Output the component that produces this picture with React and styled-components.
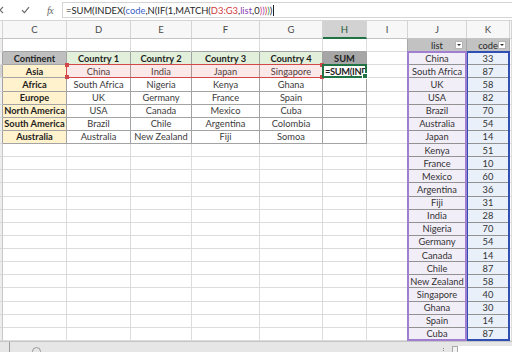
import React from 'react';
import styled, { createGlobalStyle } from 'styled-components';

const GlobalStyle = createGlobalStyle`
  html, body { margin: 0; padding: 0; background: #fff; }
  body { font-family: Lato, "Open Sans", sans-serif; overflow: hidden; }
`;

const Window = styled.div`
  width: 512px;
  height: 352px;
  display: flex;
  flex-direction: column;
  overflow: hidden;
  background: #fff;
`;

const FormulaBar = styled.div`
  flex: none;
  height: 20px;
  display: flex;
  align-items: center;
  border-bottom: 1px solid #d6d6d6;
`;

const BarButtons = styled.div`
  width: 62px;
  height: 100%;
  display: flex;
  align-items: center;
  color: #6b6b6b;
`;

const BarIcon = styled.span`
  display: flex;
  align-items: center;
  margin-left: ${p => p.$ml}px;
`;

const Fx = styled.span`
  font-family: "Liberation Serif", serif;
  font-style: italic;
  font-size: 10px;
  color: #666;
  margin-left: 17px;
  letter-spacing: -0.5px;
`;

const FormulaInput = styled.div`
  flex: 1;
  height: 16px;
  box-sizing: border-box;
  border: 1px solid #d4d4d4;
  border-right: none;
  display: flex;
  align-items: center;
  padding-left: 3px;
  font-size: 9.4px;
  color: #262626;
  white-space: nowrap;
`;

const Tok = styled.span`
  color: ${p => p.$c || '#262626'};
`;

const Caret = styled.span`
  width: 1px;
  height: 11px;
  background: #222;
  margin-left: 1px;
`;

const Sheet = styled.div`
  flex: none;
  display: grid;
  grid-template-columns: 3px 64px 64px 61px 68px 63px 44px 41px 59px 43px 1fr;
  grid-template-rows: 18px repeat(23, 13.14px);
`;

const ColHead = styled.div`
  grid-row: 1;
  grid-column: ${p => p.$c};
  box-sizing: border-box;
  display: flex;
  align-items: center;
  justify-content: center;
  font-size: 9.5px;
  color: ${p => (p.$active ? '#1e5b38' : '#4a4a4a')};
  background: ${p => (p.$active ? '#d2d2d2' : '#f7f7f7')};
  border-right: 1px solid #d4d4d4;
  border-bottom: ${p => (p.$active ? '2px solid #217346' : '1px solid #c4c4c4')};
`;

const RowStub = styled.div`
  grid-row: ${p => p.$r};
  grid-column: 1;
  box-sizing: border-box;
  background: ${p => (p.$active ? '#d2d2d2' : '#eeeeee')};
  border-right: 1px solid ${p => p.$edge || '#c8c8c8'};
  border-bottom: 1px solid #d8d8d8;
`;

const Cell = styled.div`
  grid-row: ${p => p.$r};
  grid-column: ${p => p.$c};
  box-sizing: border-box;
  display: flex;
  align-items: center;
  justify-content: ${p => (p.$left ? 'flex-start' : 'center')};
  padding-left: ${p => (p.$left ? 2 : 0)}px;
  overflow: hidden;
  white-space: nowrap;
  font-size: 9.3px;
  font-weight: ${p => (p.$bold ? 700 : 400)};
  color: ${p => p.$color || '#3b3b3b'};
  background: ${p => p.$bg || '#fff'};
  border-right: 1px solid ${p => p.$right || '#dcdcdc'};
  border-bottom: 1px solid ${p => p.$bottom || '#dcdcdc'};
`;

const EditText = styled.span`
  letter-spacing: -0.35px;
`;

const FilterHead = styled(Cell)`
  position: relative;
  background: #c2c2c2;
  color: #262626;
  border-bottom-color: #8c8c8c;
  border-right-color: #a8a8a8;
`;

const DropButton = styled.span`
  position: absolute;
  right: 3px;
  top: 2px;
  width: 8px;
  height: 8px;
  box-sizing: border-box;
  background: #fff;
  border: 1px solid #b5b5b5;
  display: flex;
  align-items: center;
  justify-content: center;

  &::after {
    content: '';
    border-left: 2px solid transparent;
    border-right: 2px solid transparent;
    border-top: 2px solid #333;
  }
`;

const RefBox = styled.div`
  grid-row: ${p => p.$r};
  grid-column: ${p => p.$c};
  position: relative;
  pointer-events: none;
  margin: -1px 0 0 -1px;
  border: ${p => p.$w || 1}px solid ${p => p.$color};
  background: ${p => p.$fill || 'transparent'};
`;

const Handle = styled.span`
  position: absolute;
  width: 4px;
  height: 4px;
  background: ${p => p.$color};
  ${p => (p.$top ? 'top: -2px;' : 'bottom: -2px;')}
  ${p => (p.$leftSide ? 'left: -2px;' : 'right: -2px;')}
`;

const ActiveHandle = styled.span`
  position: absolute;
  right: -3px;
  bottom: -3px;
  width: 4px;
  height: 4px;
  background: #217346;
  border: 1px solid #fff;
`;

const Footer = styled.div`
  flex: 1;
  display: flex;
  background: #e6e6e6;
  border-top: 1px solid #c6c6c6;
`;

const TabNav = styled.div`
  width: 10px;
  position: relative;
  border-right: 1px solid #9c9c9c;
  box-sizing: border-box;

  &::after {
    content: '';
    position: absolute;
    left: 0;
    bottom: 0;
    width: 3px;
    height: 4px;
    background: #1d7a5a;
  }
`;

const Tabs = styled.div`
  flex: 1;
  display: flex;
  align-items: flex-start;
  padding: 5px 0 0 22px;
`;

const AddSheet = styled.span`
  width: 9px;
  height: 9px;
  box-sizing: border-box;
  border: 1px solid #9a9a9a;
  border-radius: 50%;
`;

const ScrollArea = styled.div`
  width: 69px;
  display: flex;
  align-items: flex-start;
  padding-top: 4px;
`;

const Splitter = styled.span`
  width: 1px;
  height: 5px;
  margin: 2px 7px 0 0;
  border-left: 1px dotted #8a8a8a;
`;

const ScrollLeft = styled.span`
  width: 6px;
  height: 7px;
  box-sizing: border-box;
  border: 1px solid #a8a8a8;
  background: #f4f4f4;
`;

const ScrollTrack = styled.span`
  flex: 1;
  height: 7px;
  background: #fff;
`;

const COL_LETTERS = ['C', 'D', 'E', 'F', 'G', 'H', 'I', 'J', 'K', ''];

const HEADERS = ['Continent', 'Country 1', 'Country 2', 'Country 3', 'Country 4', 'SUM'];

const TABLE = [
  ['Asia', 'China', 'India', 'Japan', 'Singapore'],
  ['Africa', 'South Africa', 'Nigeria', 'Kenya', 'Ghana'],
  ['Europe', 'UK', 'Germany', 'France', 'Spain'],
  ['North America', 'USA', 'Canada', 'Mexico', 'Cuba'],
  ['South America', 'Brazil', 'Chile', 'Argentina', 'Colombia'],
  ['Australia', 'Australia', 'New Zealand', 'Fiji', 'Somoa'],
];

const LIST = [
  ['China', 33], ['South Africa', 87], ['UK', 58], ['USA', 82], ['Brazil', 70],
  ['Australia', 54], ['Japan', 14], ['Kenya', 51], ['France', 10], ['Mexico', 60],
  ['Argentina', 36], ['Fiji', 31], ['India', 28], ['Nigeria', 70], ['Germany', 54],
  ['Canada', 14], ['Chile', 87], ['New Zealand', 58], ['Singapore', 40], ['Ghana', 30],
  ['Spain', 14], ['Cuba', 87],
];

const FORMULA = [
  ['=SUM(INDEX('],
  ['code', '#3d62c9'],
  [',N(IF(1,MATCH('],
  ['D3:G3', '#cf3b3b'],
  [','],
  ['list', '#8b3fb5'],
  [',0'],
  [')', '#d9407a'],
  [')', '#8b3fb5'],
  [')', '#cf3b3b'],
  [')', '#2f8f4e'],
  [')'],
];

const TABLE_LINE = '#a3a3a3';
const LIST_LINE = '#929292';

function renderRow(r) {
  const cells = [];
  const inTable = r >= 3 && r <= 9;
  cells.push(<RowStub key="s" $r={r} $active={r === 4} $edge={inTable ? TABLE_LINE : undefined} />);

  for (let c = 2; c <= 11; c++) {
    const key = `${r}-${c}`;
    if (c <= 7) {
      if (r === 3) {
        const bg = c === 2 ? '#bfbfbf' : c === 7 ? '#a6a6a6' : '#e2efda';
        cells.push(
          <Cell key={key} $r={r} $c={c} $bold $bg={bg} $color="#1f1f1f" $right={TABLE_LINE} $bottom={TABLE_LINE}>
            {HEADERS[c - 2]}
          </Cell>
        );
      } else if (inTable) {
        const row = TABLE[r - 4];
        if (c === 2) {
          cells.push(
            <Cell key={key} $r={r} $c={c} $bold $bg="#fff2cc" $color="#1f1f1f" $right={TABLE_LINE} $bottom={TABLE_LINE}>
              {row[0]}
            </Cell>
          );
        } else if (c === 7) {
          cells.push(
            <Cell key={key} $r={r} $c={c} $left $bold $color="#1f1f1f" $right={TABLE_LINE} $bottom={TABLE_LINE}>
              {r === 4 && <EditText>=SUM(IND</EditText>}
            </Cell>
          );
        } else {
          cells.push(
            <Cell key={key} $r={r} $c={c} $right={TABLE_LINE} $bottom={TABLE_LINE}>
              {row[c - 2]}
            </Cell>
          );
        }
      } else {
        cells.push(<Cell key={key} $r={r} $c={c} $bottom={r === 2 ? TABLE_LINE : undefined} />);
      }
    } else if (c === 9 || c === 10) {
      if (r === 2) {
        cells.push(
          <FilterHead key={key} $r={r} $c={c}>
            {c === 9 ? 'list' : 'code'}
            <DropButton />
          </FilterHead>
        );
      } else {
        const item = LIST[r - 3];
        cells.push(
          <Cell
            key={key}
            $r={r}
            $c={c}
            $color="#333"
            $bg={c === 9 ? '#f2eef8' : '#e9f0f9'}
            $bottom={LIST_LINE}
            $right={c === 9 ? '#c9bde0' : '#c9d4ea'}
          >
            {c === 9 ? item[0] : item[1]}
          </Cell>
        );
      }
    } else {
      cells.push(<Cell key={key} $r={r} $c={c} $right={c === 8 && r === 2 ? '#a8a8a8' : undefined} />);
    }
  }
  return cells;
}

export default function App() {
  const rows = [];
  for (let r = 2; r <= 24; r++) rows.push(...renderRow(r));

  return (
    <Window>
      <GlobalStyle />
      <FormulaBar>
        <BarButtons>
          <BarIcon $ml={-4}>
            <svg width="8" height="8" viewBox="0 0 8 8">
              <path d="M1 1 L7 7 M7 1 L1 7" stroke="#6b6b6b" strokeWidth="1.1" fill="none" />
            </svg>
          </BarIcon>
          <BarIcon $ml={17}>
            <svg width="9" height="8" viewBox="0 0 9 8">
              <path d="M1 4.2 L3.5 6.6 L8 1.2" stroke="#6b6b6b" strokeWidth="1.2" fill="none" />
            </svg>
          </BarIcon>
          <Fx>fx</Fx>
        </BarButtons>
        <FormulaInput>
          {FORMULA.map(([t, c], i) => (
            <Tok key={i} $c={c}>{t}</Tok>
          ))}
          <Caret />
        </FormulaInput>
      </FormulaBar>

      <Sheet>
        <ColHead $c={1} />
        {COL_LETTERS.map((l, i) => (
          <ColHead key={i} $c={i + 2} $active={l === 'H'}>{l}</ColHead>
        ))}
        {rows}

        <RefBox $r="4" $c="3 / 7" $color="#d04848" $fill="rgba(226, 80, 80, 0.13)">
          <Handle $color="#d04848" $top $leftSide />
          <Handle $color="#d04848" $leftSide />
          <Handle $color="#d04848" $top />
          <Handle $color="#d04848" />
        </RefBox>
        <RefBox $r="4" $c="7" $w={2} $color="#217346">
          <ActiveHandle />
        </RefBox>
        <RefBox $r="3 / 25" $c="10" $w={2} $color="#2f4fb3" />
        <RefBox $r="3 / 25" $c="9" $w={2} $color="#a07fd0" />
      </Sheet>

      <Footer>
        <TabNav />
        <Tabs>
          <AddSheet />
        </Tabs>
        <ScrollArea>
          <Splitter />
          <ScrollLeft />
          <ScrollTrack />
        </ScrollArea>
      </Footer>
    </Window>
  );
}
